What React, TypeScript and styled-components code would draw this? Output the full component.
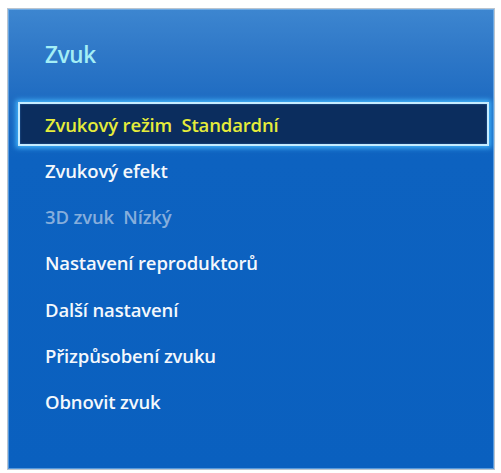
import React from "react";
import styled, { createGlobalStyle } from "styled-components";

const Global = createGlobalStyle`
  html, body { margin: 0; padding: 0; background: #ffffff; }
  body { font-family: "Open Sans", "Noto Sans", sans-serif; }
`;

const Page = styled.div`
  width: 501px;
  height: 473px;
  padding: 8px 6px 3px 7px;
  box-sizing: border-box;
`;

const Panel = styled.div`
  width: 488px;
  height: 462px;
  box-sizing: border-box;
  border: 1px solid #b9c4cf;
  box-shadow: inset 0 0 0 1px rgba(150, 200, 245, 0.55);
  background: linear-gradient(
    180deg,
    #3d86d0 0px,
    #3079c8 40px,
    #1f6cc2 90px,
    #0d62c0 150px,
    #0a60bf 100%
  );
  display: flex;
  flex-direction: column;
  padding: 0 5px 0 10px;
`;

const Title = styled.div`
  height: 92px;
  line-height: 92px;
  padding-left: 27px;
  font-size: 22.5px;
  font-weight: 600;
  color: #a3eef6;
  letter-spacing: -0.3px;
`;

const Row = styled.div<{ $state?: "active" | "disabled" }>`
  height: 46.3px;
  box-sizing: border-box;
  display: flex;
  align-items: center;
  padding-left: 27px;
  font-size: 18.5px;
  font-weight: 600;
  letter-spacing: -0.15px;
  white-space: pre;
  color: ${(p) =>
    p.$state === "active" ? "#e6ec3a" : p.$state === "disabled" ? "#86aedc" : "#f4f8fc"};
`;

const ActiveRow = styled(Row)`
  height: 44px;
  margin: 1px 0;
  border: 2px solid #c6ecff;
  background: #0b2d5e;
  box-shadow: 0 0 5px 2px rgba(70, 185, 255, 0.95),
    inset 0 0 2px rgba(90, 170, 255, 0.5);
  padding-left: 25px;
`;

const items: { label: string; disabled?: boolean }[] = [
  { label: "Zvukový efekt" },
  { label: "3D zvuk  Nízký", disabled: true },
  { label: "Nastavení reproduktorů" },
  { label: "Další nastavení" },
  { label: "Přizpůsobení zvuku" },
  { label: "Obnovit zvuk" },
];

export default function App() {
  return (
    <>
      <Global />
      <Page>
        <Panel>
          <Title>Zvuk</Title>
          <ActiveRow $state="active">Zvukový režim  Standardní</ActiveRow>
          {items.map((it) => (
            <Row key={it.label} $state={it.disabled ? "disabled" : undefined}>
              {it.label}
            </Row>
          ))}
        </Panel>
      </Page>
    </>
  );
}
